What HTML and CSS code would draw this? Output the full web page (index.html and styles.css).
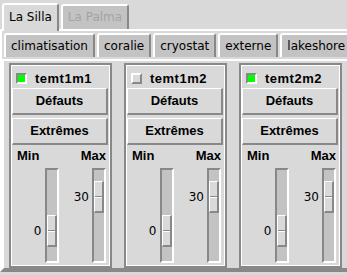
FILE: index.html
```html
<!DOCTYPE html>
<html>
<head lang="fr">
    <meta charset="UTF-8">
    <title>Températures</title>
    <link rel="stylesheet" href="styles.css">
</head>
<body>
<div id="sites" class="tabs">
    <span class="tab on">La Silla</span>
    <span class="tab off">La Palma</span>
</div>
<div id="site" class="page">
    <div id="groups" class="tabs">
        <span class="tab">climatisation</span>
        <span class="tab">coralie</span>
        <span class="tab">cryostat</span>
        <span class="tab">externe</span>
        <span class="tab">lakeshore</span>
    </div>
    <div id="group" class="page">
        <div class="panel">
            <div class="check"><span class="box on"></span>temt1m1</div>
            <a href="javascript:;" class="btn">Défauts</a>
            <a href="javascript:;" class="btn">Extrêmes</a>
            <div class="labels"><span>Min</span><span>Max</span></div>
            <div class="scales">
                <div class="scale">
                    <div class="value"><span style="margin-top: 56px;">0</span></div>
                    <div class="trough"><div class="thumb" style="margin-top: 45px;"></div></div>
                </div>
                <div class="scale">
                    <div class="value"><span style="margin-top: 22px;">30</span></div>
                    <div class="trough"><div class="thumb" style="margin-top: 11px;"></div></div>
                </div>
            </div>
        </div>
        <div class="panel">
            <div class="check"><span class="box"></span>temt1m2</div>
            <a href="javascript:;" class="btn">Défauts</a>
            <a href="javascript:;" class="btn">Extrêmes</a>
            <div class="labels"><span>Min</span><span>Max</span></div>
            <div class="scales">
                <div class="scale">
                    <div class="value"><span style="margin-top: 56px;">0</span></div>
                    <div class="trough"><div class="thumb" style="margin-top: 45px;"></div></div>
                </div>
                <div class="scale">
                    <div class="value"><span style="margin-top: 22px;">30</span></div>
                    <div class="trough"><div class="thumb" style="margin-top: 11px;"></div></div>
                </div>
            </div>
        </div>
        <div class="panel">
            <div class="check"><span class="box on"></span>temt2m2</div>
            <a href="javascript:;" class="btn">Défauts</a>
            <a href="javascript:;" class="btn">Extrêmes</a>
            <div class="labels"><span>Min</span><span>Max</span></div>
            <div class="scales">
                <div class="scale">
                    <div class="value"><span style="margin-top: 56px;">0</span></div>
                    <div class="trough"><div class="thumb" style="margin-top: 45px;"></div></div>
                </div>
                <div class="scale">
                    <div class="value"><span style="margin-top: 22px;">30</span></div>
                    <div class="trough"><div class="thumb" style="margin-top: 11px;"></div></div>
                </div>
            </div>
        </div>
    </div>
</div>
</body>
</html>
```

FILE: styles.css
```css
* { margin: 0; padding: 0; box-sizing: border-box; text-decoration: none;}
body { background: #d9d9d9; color: #000; height: 275px; overflow: hidden;
    font: 12px "DejaVu Sans", sans-serif;}

/* onglets */
.tabs { display: flex; align-items: flex-start; gap: 2px; padding-left: 2px; white-space: nowrap;}
.tab { height: 25px; padding: 1px 5px 0; line-height: 20px; background: #c3c3c3;
    border: 2px solid; border-bottom: 0; border-color: #fff #888 transparent #fff;
    border-radius: 3px 3px 0 0;}
.tab.on { height: 28px; margin-top: -1px; padding-top: 2px; background: #d9d9d9;
    position: relative; z-index: 1;}
.tab.off { color: #a3a3a3;}
#sites { height: 29px; padding-top: 4px;}
#groups { height: 26px; overflow: hidden;}
#groups .tab { height: 24px; padding: 1px 5px 0;}
#groups .tab:last-child { padding-right: 2px;}

.page { border: 2px solid; border-color: #fff #888 #888 #fff;}
#site { width: 360px; height: 243px; padding-top: 2px;}
#group { height: 211px; display: flex; gap: 12px; padding: 2px 0 0 5px;}

/* capteurs */
.panel { width: 103px; height: 205px; border: 2px solid #888; box-shadow: inset 0 0 0 1px #fff;
    padding: 0 2px 0 1px; display: flex; flex-direction: column;}
.check, .btn, .labels { font: bold 13px "Liberation Sans", sans-serif;}
.check { display: flex; align-items: center; gap: 8px; height: 20px; margin: 3px 0 0 4px;
    letter-spacing: 0.5px;}
.box { width: 11px; height: 11px; border: 2px solid; border-color: #fff #888 #888 #fff;
    background: #d9d9d9;}
.box.on { border-color: #888 #fff #fff #888; background: #00ff00;}
.btn { display: block; height: 27px; line-height: 24px; text-align: center; color: #000;
    border: solid; border-width: 1px 2px 2px 1px; border-color: #fff #888 #888 #fff;}
.btn + .btn { margin-top: 3px;}
.labels { display: flex; justify-content: space-between; align-items: center; height: 21px;
    padding: 0 2px 0 5px;}

/* curseurs */
.scales { display: flex; gap: 1px; height: 95px; margin-top: 2px; padding-right: 2px;}
.scale { flex: 1; display: flex; gap: 3px;}
.value { flex: 1; display: flex; flex-direction: column; align-items: flex-end;}
.value span { line-height: 14px;}
.trough { width: 14px; height: 95px; background: #c3c3c3;
    border: 2px solid; border-color: #888 #fff #fff #888;}
.thumb { height: 32px; border: solid; border-width: 1px 2px 2px 1px; border-color: #fff #888 #888 #fff;
    background: linear-gradient(#d9d9d9 14px, #888 14px, #888 15px, #fff 15px, #fff 16px, #d9d9d9 16px);}
```
